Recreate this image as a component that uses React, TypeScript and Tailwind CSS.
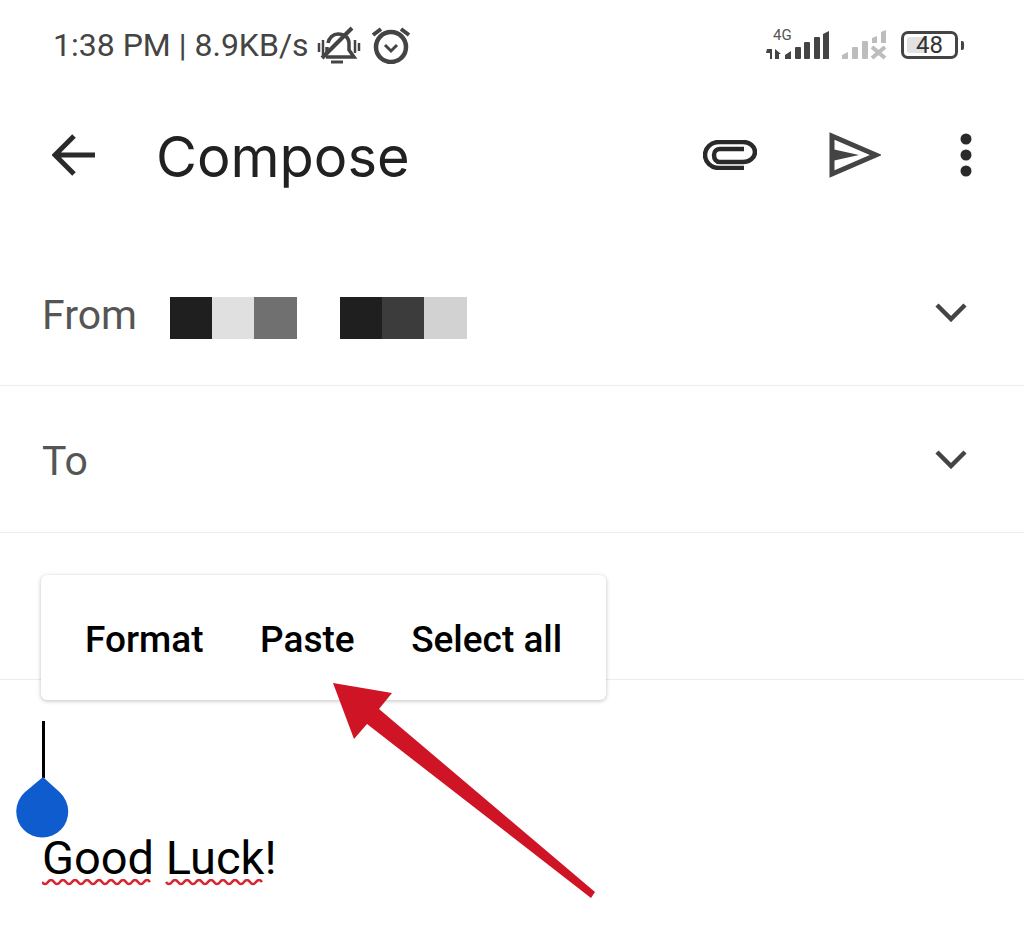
export default function App() {
  return (
    <div className="relative h-[944px] w-[1024px] overflow-hidden bg-white font-['Roboto',sans-serif]">
      {/* Status bar */}
      <div className="flex h-[90px] items-center justify-between pl-[53px] pr-[60px] text-[#444]">
        <div className="flex items-center">
          <span className="text-[32px] leading-none">1:38 PM | 8.9KB/s</span>
          <svg className="ml-[8px]" width="44" height="40" viewBox="0 0 44 40" fill="none" stroke="#444" strokeWidth="3.5">
            <path d="M9 32h28l-5-7V18c0-5-4-9-11-9-5 0-9 4-10 9M10 28v-6" />
            <path d="M5 33 35 3" strokeWidth="4" />
            <path d="M14 37h12" strokeWidth="3" />
            <path d="M2 18v9M6 15v15M38 15v13M42 18v8" strokeWidth="2.5" />
          </svg>
          <svg className="ml-[10px]" width="40" height="38" viewBox="0 0 40 38" fill="none" stroke="#444">
            <circle cx="20" cy="21" r="15" strokeWidth="4.5" />
            <path d="m14 19 6 6 6-6" strokeWidth="3" />
            <path d="m2 9 8-6M38 9l-8-6" strokeWidth="4" />
          </svg>
        </div>
        <div className="flex items-center">
          <svg className="-mt-[10px]" width="66" height="40" viewBox="0 -6 66 40" fill="#444">
            <text x="7" y="14" fontFamily="Roboto" fontSize="15" fill="#555">4G</text>
            <path d="M1 23h5v10H4v-6H0ZM9 23l6 5h-2v5H9Z" />
            <path d="M19 33v-4l6-4v8Z" />
            <rect x="29" y="21" width="6" height="12" rx="1" />
            <rect x="38" y="16" width="6" height="17" rx="1" />
            <rect x="48" y="11" width="6" height="22" rx="1" />
            <path d="M57 33V8l6-3v28Z" />
          </svg>
          <svg className="-mt-[4px] ml-[9px]" width="48" height="34" viewBox="0 0 48 34" fill="#bdbdbd">
            <path d="M1 33v-4l6-3v7Z" />
            <rect x="11" y="21" width="6" height="12" rx="1" />
            <rect x="21" y="15" width="6" height="18" rx="1" />
            <path d="M31 17v-5l5-2v7Z" />
            <path d="M40 17V6l5-2v13Z" />
            <path d="m31 21 13 11M44 21 31 32" stroke="#bdbdbd" strokeWidth="4" />
          </svg>
          <div className="relative ml-[12px] flex h-[28px] w-[57px] items-center justify-center rounded-[7px] border-[3px] border-[#444]">
            <div className="absolute left-[3px] top-[3px] h-[16px] w-[18px] rounded-[2px] bg-[#e2e2e2]" />
            <span className="relative text-[24px] leading-none text-[#333]">48</span>
          </div>
          <div className="ml-[3px] h-[9px] w-[3px] rounded-r-[2px] bg-[#444]" />
        </div>
      </div>

      {/* Header */}
      <div className="flex h-[149px] items-center pb-[19px] pl-[52px] pr-[52px]">
        <svg width="44" height="42" viewBox="0 0 44 42" fill="none" stroke="#2a2a2a" strokeWidth="5">
          <path d="M43 21H4M22 2 3 21l19 19" />
        </svg>
        <span className="ml-[60px] mt-[3px] font-['Inter',sans-serif] text-[56px] leading-none text-[#212121]">Compose</span>
        <svg className="ml-auto" width="54" height="30" viewBox="0 0 54 30" fill="none" stroke="#2a2a2a" strokeWidth="4.5">
          <path d="M41 28H16C8 28 2 22 2 15S8 2 16 2h24c6 0 12 4 12 10s-6 10-12 10H17c-4 0-6-3-6-7s3-6 6-6h24" />
        </svg>
        <svg className="ml-[72px]" width="52" height="46" viewBox="0 0 52 46" fill="none">
          <path d="M3 4 47 23 3 42Z" stroke="#444" strokeWidth="5" />
          <path d="M3 17 30 23 3 29Z" fill="#444" />
        </svg>
        <svg className="ml-[79px]" width="12" height="44" viewBox="0 0 12 44" fill="#2a2a2a">
          <circle cx="6" cy="6" r="5.5" />
          <circle cx="6" cy="22" r="5.5" />
          <circle cx="6" cy="38" r="5.5" />
        </svg>
      </div>

      {/* From */}
      <div className="flex h-[147px] items-center border-b border-[#ececec] pl-[42px] pr-[57px]">
        <span className="mt-[6px] text-[41px] leading-none text-[#555]">From</span>
        <div className="ml-[33px] mt-[12px] flex">
          <div className="h-[42px] w-[42px] bg-[#1f1f1f]" />
          <div className="h-[42px] w-[42px] bg-[#e0e0e0]" />
          <div className="h-[42px] w-[43px] bg-[#707070]" />
        </div>
        <div className="ml-[43px] mt-[12px] flex">
          <div className="h-[42px] w-[42px] bg-[#1f1f1f]" />
          <div className="h-[42px] w-[42px] bg-[#3c3c3c]" />
          <div className="h-[42px] w-[43px] bg-[#d2d2d2]" />
        </div>
        <svg className="ml-auto" width="32" height="20" viewBox="0 0 32 20" fill="none" stroke="#444" strokeWidth="4.5">
          <path d="m2 3 14 14L30 3" />
        </svg>
      </div>

      {/* To */}
      <div className="flex h-[147px] items-center justify-between border-b border-[#ececec] pl-[42px] pr-[57px]">
        <span className="mt-[4px] text-[41px] leading-none text-[#555]">To</span>
        <svg width="32" height="20" viewBox="0 0 32 20" fill="none" stroke="#444" strokeWidth="4.5">
          <path d="m2 3 14 14L30 3" />
        </svg>
      </div>

      {/* Subject */}
      <div className="h-[147px] border-b border-[#ececec]" />

      {/* Body */}
      <div className="pl-[42px] pt-[150px]">
        <span className="text-[47px] leading-[56px] text-black">Good Luck!</span>
      </div>
      <svg className="-mt-[7px] ml-[42px]" width="224" height="8" viewBox="0 0 224 8" fill="none" stroke="#d8252f" strokeWidth="2.5">
        <path d="M0 3q3 4 6 0t6 0 6 0 6 0 6 0 6 0 6 0 6 0 6 0 6 0 6 0 6 0 6 0 6 0 6 0 6 0 6 0 6 0" />
        <path d="M124 3q3 4 6 0t6 0 6 0 6 0 6 0 6 0 6 0 6 0 6 0 6 0 6 0 6 0 6 0 6 0 6 0 6 0" />
      </svg>

      {/* Context menu */}
      <div className="absolute left-[41px] top-[575px] flex h-[125px] w-[565px] items-center gap-[56.5px] rounded-[6px] bg-white pl-[44px] pt-[3px] text-[37px] font-medium leading-none text-black shadow-[0_1px_4px_rgba(0,0,0,0.25)]">
        <span>Format</span>
        <span>Paste</span>
        <span>Select all</span>
      </div>

      {/* Cursor handle */}
      <div className="absolute left-[42px] top-[721px] h-[57px] w-[3px] bg-black" />
      <svg className="absolute left-[16px] top-[776px]" width="53" height="63" viewBox="0 0 53 63" fill="#0f5ccf">
        <path d="M27 1 44 16.6A26 26 0 1 1 8.5 16.6Z" />
      </svg>

      {/* Red arrow */}
      <svg className="absolute left-[330px] top-[680px]" width="270" height="222" viewBox="0 0 270 222" fill="#cf1426">
        <path d="M3 3 62 13 49 29 265 212 261 218 37 44 24 59Z" />
      </svg>
    </div>
  );
}
